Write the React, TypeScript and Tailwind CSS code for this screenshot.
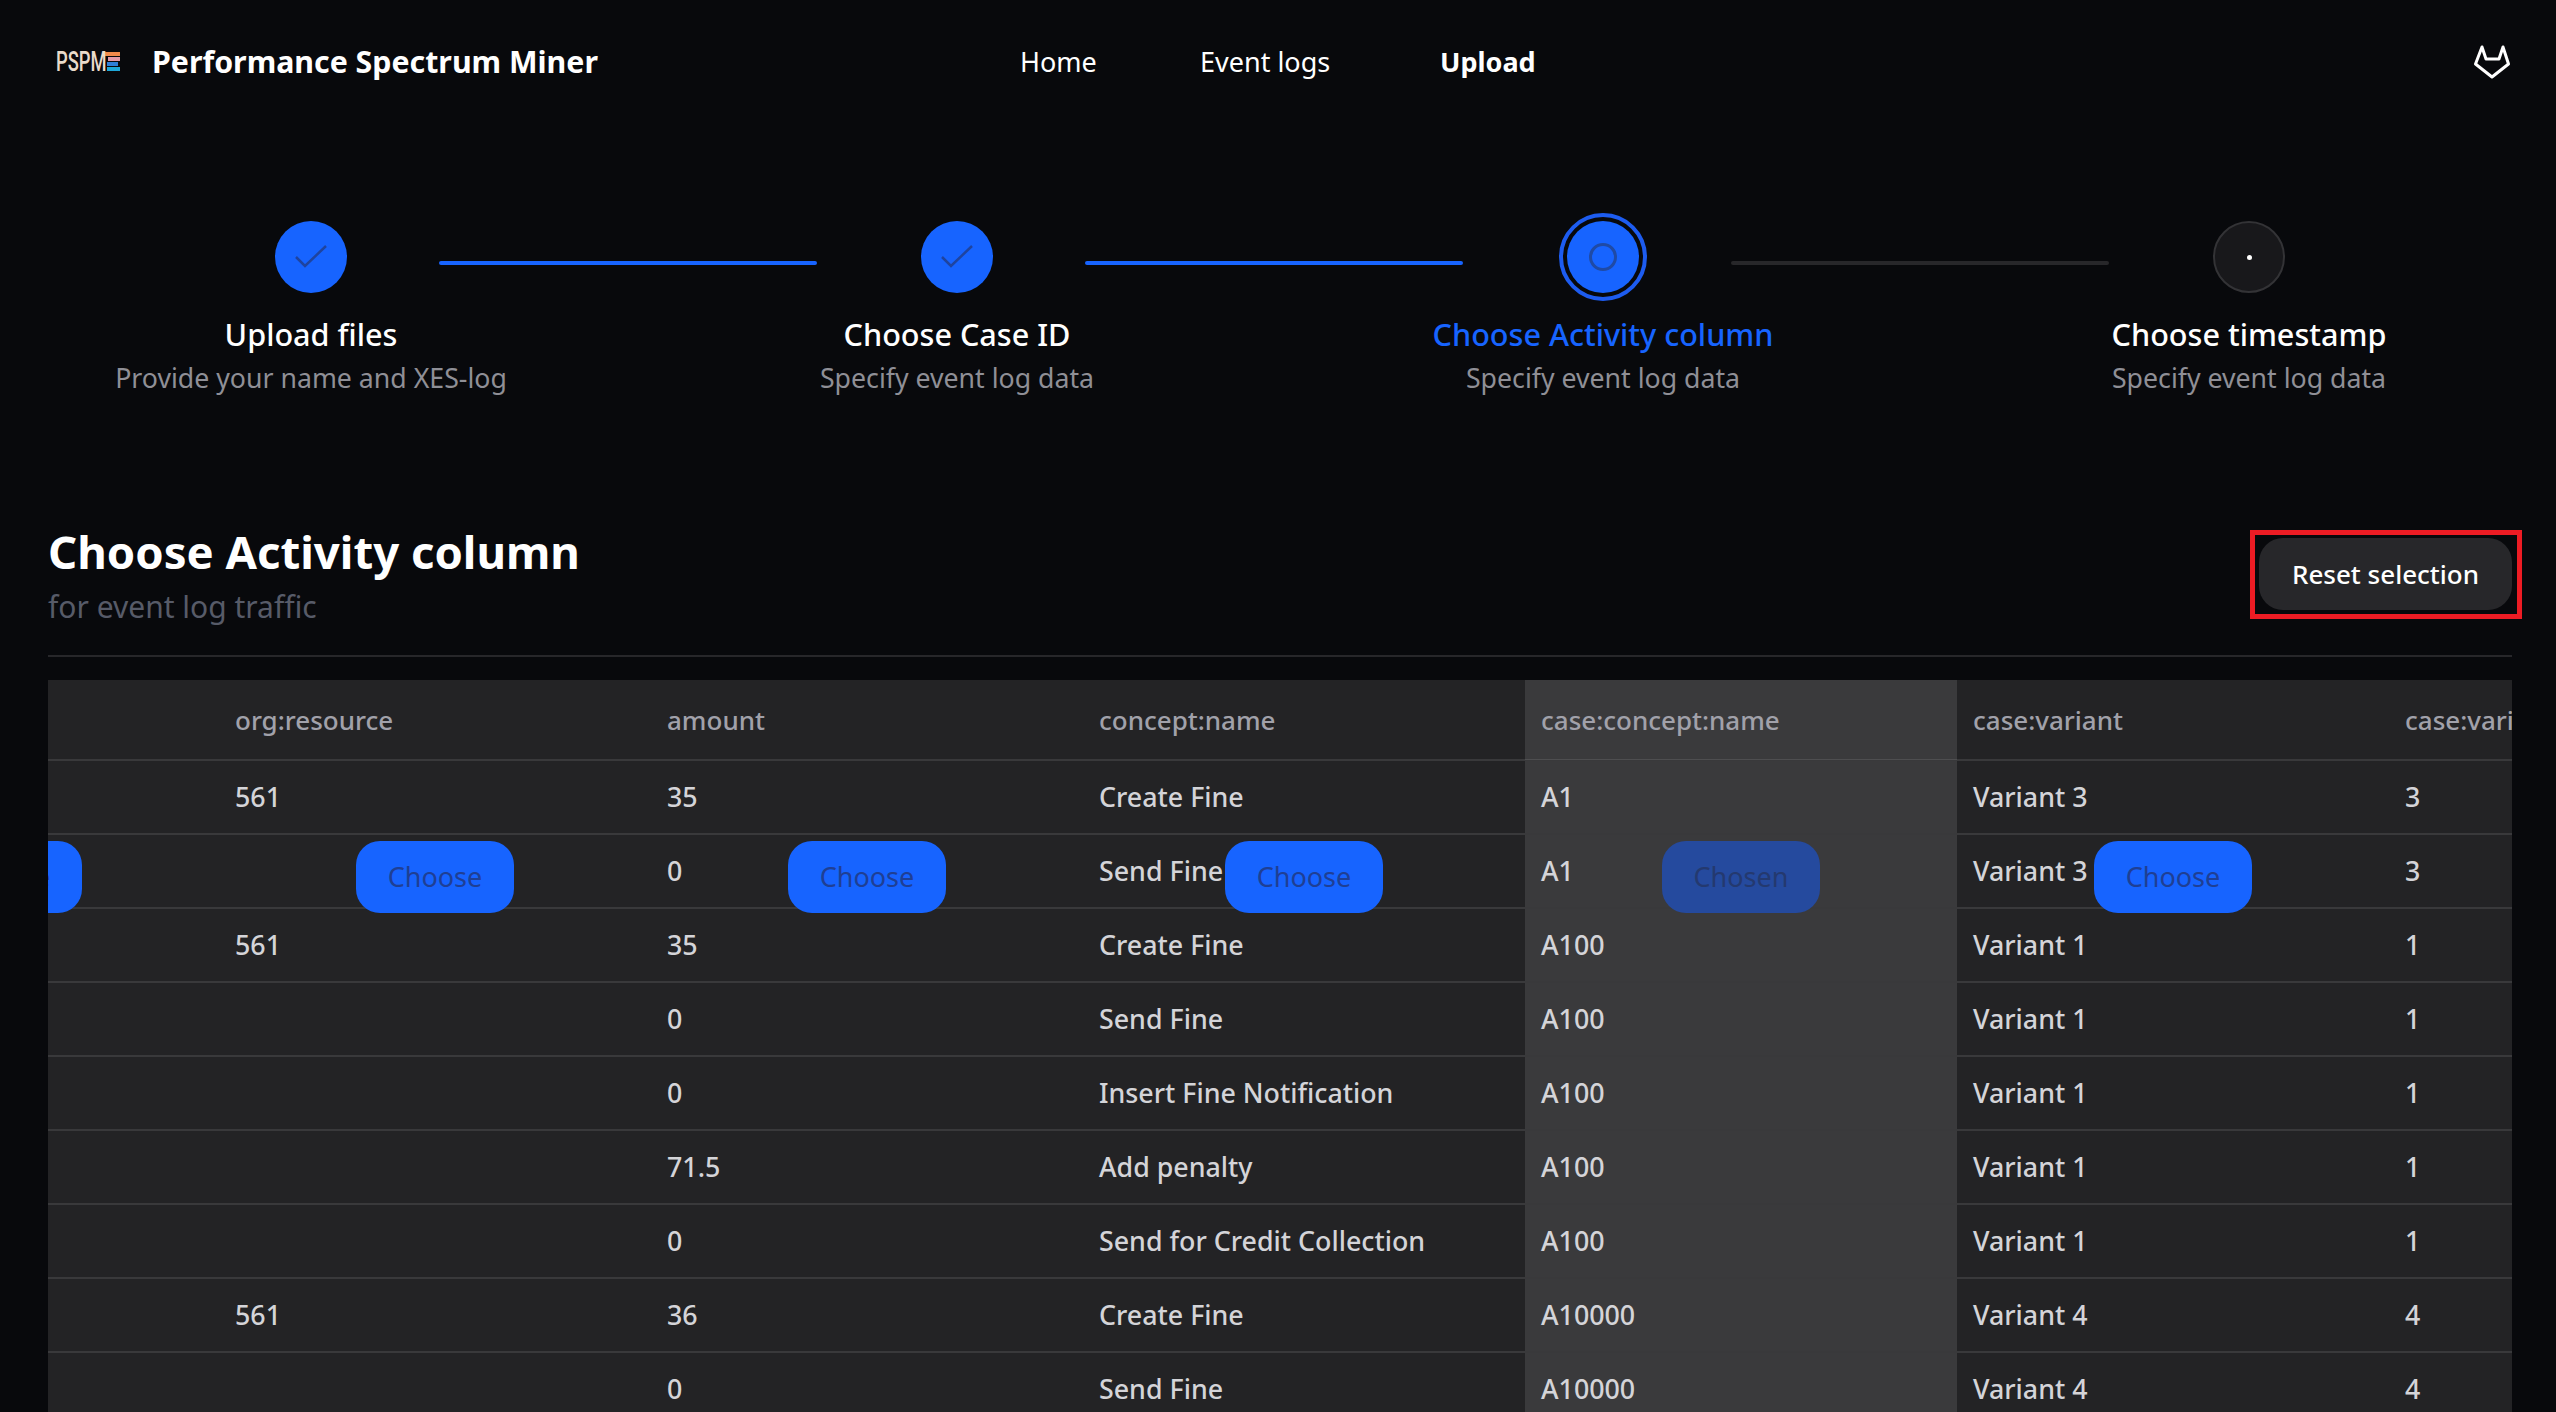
const columns = [
  { key: "prev", label: "", width: "w-[432px]" },
  { key: "resource", label: "org:resource", width: "w-[432px]" },
  { key: "amount", label: "amount", width: "w-[432px]" },
  { key: "concept", label: "concept:name", width: "w-[442px]" },
  { key: "case", label: "case:concept:name", width: "w-[432px]" },
  { key: "variant", label: "case:variant", width: "w-[432px]" },
  { key: "index", label: "case:variant-index", width: "w-[432px]" },
];

const rows = [
  ["", "561", "35", "Create Fine", "A1", "Variant 3", "3"],
  ["", "", "0", "Send Fine", "A1", "Variant 3", "3"],
  ["", "561", "35", "Create Fine", "A100", "Variant 1", "1"],
  ["", "", "0", "Send Fine", "A100", "Variant 1", "1"],
  ["", "", "0", "Insert Fine Notification", "A100", "Variant 1", "1"],
  ["", "", "71.5", "Add penalty", "A100", "Variant 1", "1"],
  ["", "", "0", "Send for Credit Collection", "A100", "Variant 1", "1"],
  ["", "561", "36", "Create Fine", "A10000", "Variant 4", "4"],
  ["", "", "0", "Send Fine", "A10000", "Variant 4", "4"],
];

const CHOSEN = 4;

const steps = [
  { title: "Upload files", sub: "Provide your name and XES-log", state: "done" },
  { title: "Choose Case ID", sub: "Specify event log data", state: "done" },
  { title: "Choose Activity column", sub: "Specify event log data", state: "active" },
  { title: "Choose timestamp", sub: "Specify event log data", state: "todo" },
];

const Logo = () => (
  <div className="flex h-[20px] w-[64px] items-start">
    <span className="w-[49px] origin-left scale-x-[0.68] whitespace-nowrap font-['Roboto',sans-serif] text-[27px] font-medium leading-[20px] text-[#eadbcb]">
      PSPM
    </span>
    <div className="flex h-[20px] w-[15px] flex-col items-end gap-px">
      <div className="h-[4px] w-[15px] bg-[#f08a4b]" />
      <div className="h-[4px] w-[12px] bg-[#e39aa8]" />
      <div className="mr-[2px] h-[4px] w-[11px] bg-[#2f7fd8]" />
      <div className="h-[4px] w-[13px] bg-[#1ea7d8]" />
    </div>
  </div>
);

const GitlabIcon = () => (
  <svg viewBox="0 0 36 34" className="h-[34px] w-[36px]" fill="none" stroke="#fff" strokeWidth="3" strokeLinejoin="round">
    <path d="M8 2 L12 14 H25 L29 2 L34.5 19 L18 32 L1.5 19 Z" />
  </svg>
);

const StepIcon = ({ state }: { state: string }) => {
  if (state === "done") {
    return (
      <div className="flex h-[72px] w-[72px] items-center justify-center rounded-full bg-[#1764ff]">
        <svg viewBox="0 0 32 24" className="h-[24px] w-[32px]" fill="none" stroke="#1f449f" strokeWidth="2.5">
          <path d="M1 12 L10 21 L31 1" />
        </svg>
      </div>
    );
  }
  if (state === "active") {
    return (
      <div className="flex h-[88px] w-[88px] items-center justify-center rounded-full border-[4px] border-[#1d5cf0]">
        <div className="flex h-[72px] w-[72px] items-center justify-center rounded-full bg-[#1764ff]">
          <div className="h-[28px] w-[28px] rounded-full border-[3px] border-[#1f4aa5]" />
        </div>
      </div>
    );
  }
  return (
    <div className="flex h-[72px] w-[72px] items-center justify-center rounded-full border-2 border-[#333336] bg-[#18181b]">
      <div className="h-[5px] w-[5px] rounded-full bg-white" />
    </div>
  );
};

const Stepper = () => (
  <div className="ml-[183px] flex items-start">
    {steps.map((step, i) => (
      <div key={step.title} className="flex items-start">
        <div className={i === 0 ? "flex w-[256px] flex-col items-center" : "ml-[12px] flex w-[256px] flex-col items-center"}>
          <div className="flex h-[88px] w-[88px] items-center justify-center">
            <StepIcon state={step.state} />
          </div>
          <div className={step.state === "active" ? "mt-[13px] whitespace-nowrap text-[30.6px] font-medium leading-[40px] text-[#1764ff]" : "mt-[13px] whitespace-nowrap text-[30.6px] font-medium leading-[40px] text-white"}>
            {step.title}
          </div>
          <div className="mt-[5px] whitespace-nowrap text-[26.7px] leading-[38px] text-[#8f8f96]">{step.sub}</div>
        </div>
        {i < steps.length - 1 && (
          <div className={i === 2 ? "mt-[48px] h-[4px] w-[378px] rounded-full bg-[#27272a]" : "mt-[48px] h-[4px] w-[378px] rounded-full bg-[#1764ff]"} />
        )}
      </div>
    ))}
  </div>
);

const DataTable = () => (
  <div className="mt-[23px] overflow-hidden bg-[#232325]">
    <table className="-ml-[261px] w-[2934px] table-fixed border-collapse text-left">
      <colgroup>
        {columns.map((c) => (
          <col key={c.key} className={c.width} />
        ))}
      </colgroup>
      <thead>
        <tr>
          {columns.map((c, i) => (
            <th
              key={c.key}
              className={
                i === CHOSEN
                  ? "h-[80px] whitespace-nowrap border-b-2 border-white/10 bg-[#3a3a3c] px-4 pt-[2px] text-[26px] font-medium text-[#a1a1aa]"
                  : "h-[80px] whitespace-nowrap border-b-2 border-white/10 px-4 pt-[2px] text-[26px] font-medium text-[#a1a1aa]"
              }
            >
              {c.label}
            </th>
          ))}
        </tr>
      </thead>
      <tbody>
        {rows.map((row, r) => (
          <tr key={r}>
            {row.map((cell, i) => (
              <td
                key={i}
                className={
                  i === CHOSEN
                    ? "relative h-[74px] whitespace-nowrap border-b-2 border-white/10 bg-[#3a3a3c] px-4 text-[26.8px] font-medium text-[#d4d4d8]"
                    : "relative h-[74px] whitespace-nowrap border-b-2 border-white/10 px-4 text-[26.8px] font-medium text-[#d4d4d8]"
                }
              >
                {cell}
                {r === 1 && (
                  <button
                    className={
                      i === CHOSEN
                        ? "absolute left-1/2 top-[6px] z-10 h-[72px] w-[158px] -translate-x-1/2 rounded-[24px] bg-[#254a9e] text-[27px] font-normal text-[#24396f]"
                        : "absolute left-1/2 top-[6px] z-10 h-[72px] w-[158px] -translate-x-1/2 rounded-[24px] bg-[#1764ff] text-[27px] font-normal text-[#1f3f94]"
                    }
                  >
                    {i === CHOSEN ? "Chosen" : "Choose"}
                  </button>
                )}
              </td>
            ))}
          </tr>
        ))}
      </tbody>
    </table>
  </div>
);

export default function App() {
  return (
    <div className="h-[1412px] overflow-hidden bg-[#08090c] font-['Noto_Sans',sans-serif] text-white">
      <header className="flex h-[124px] items-center pl-[56px] pr-[46px]">
        <Logo />
        <div className="ml-[32px] w-[868px] whitespace-nowrap text-[30.3px] font-bold leading-[44px]">Performance Spectrum Miner</div>
        <nav className="flex items-center text-[27px] leading-[40px]">
          <span className="w-[180px]">Home</span>
          <span className="w-[240px]">Event logs</span>
          <span className="font-bold">Upload</span>
        </nav>
        <div className="ml-auto">
          <GitlabIcon />
        </div>
      </header>

      <div className="mt-[89px]">
        <Stepper />
      </div>

      <main className="mt-[124px] pl-12 pr-[44px]">
        <div className="flex items-start justify-between border-b-2 border-[#27272a] pb-[28px]">
          <div>
            <h1 className="whitespace-nowrap text-[45.5px] font-bold leading-[60px]">Choose Activity column</h1>
            <p className="mt-[6px] whitespace-nowrap text-[30px] leading-[40px] text-[#575b68]">for event log traffic</p>
          </div>
          <div className="relative mt-[17px]">
            <button className="h-[72px] w-[253px] rounded-[24px] bg-[#27272a] text-[26px] font-medium text-white">Reset selection</button>
            <div className="absolute -bottom-[9px] -left-[9px] -right-[10px] -top-[8px] border-[5px] border-[#ed1c24]" />
          </div>
        </div>
        <DataTable />
      </main>
    </div>
  );
}
